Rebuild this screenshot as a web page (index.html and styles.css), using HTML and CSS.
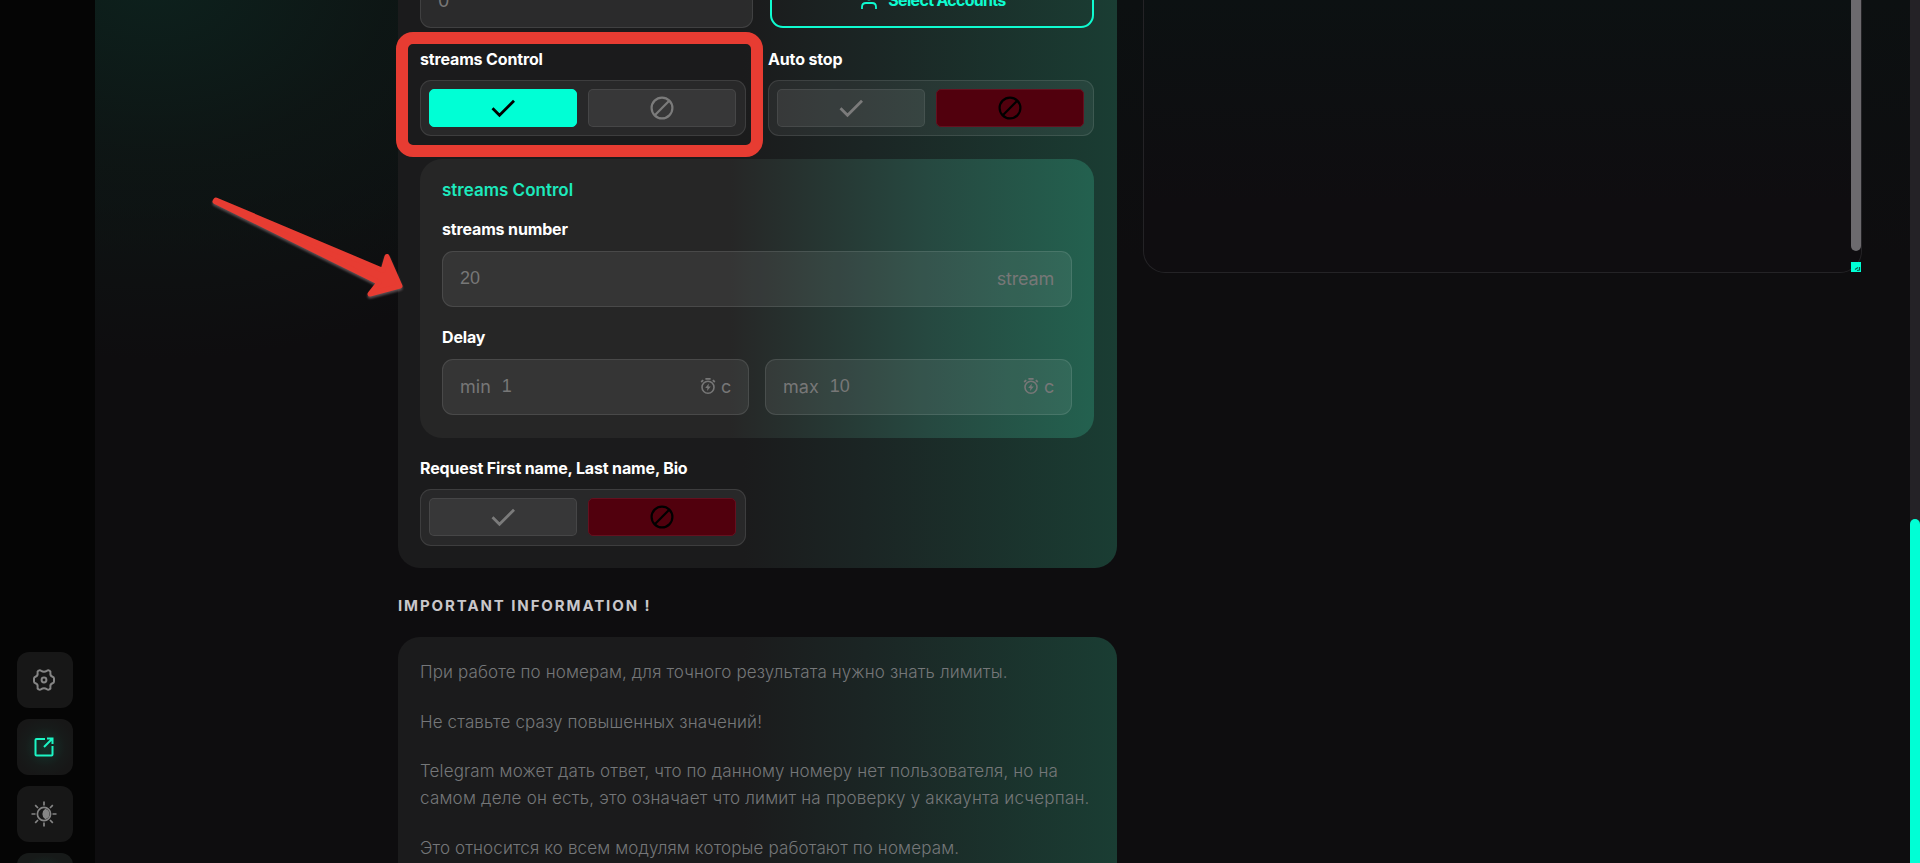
FILE: index.html
```html
<!DOCTYPE html>
<html lang="en">
  <head>
    <meta charset="UTF-8" />
    <meta name="viewport" content="width=device-width, initial-scale=1.0" />
    <title>Streams Control</title>
    <link rel="stylesheet" href="styles.css">
  </head>
  <body>
    <svg class="defs" width="0" height="0">
      <symbol id="check" viewBox="0 0 24 24">
        <path d="M1.5 12.2l7 7L23 4.8" fill="none" stroke="currentColor" stroke-width="2.8" />
      </symbol>
      <symbol id="ban" viewBox="0 0 24 24">
        <circle cx="12" cy="12" r="10.4" fill="none" stroke="currentColor" stroke-width="2.2" />
        <path d="M4.8 19.2L19.2 4.8" stroke="currentColor" stroke-width="2.2" />
      </symbol>
      <symbol id="timer" viewBox="0 0 16 18">
        <circle cx="8" cy="10.3" r="6" fill="none" stroke="currentColor" stroke-width="1.6" />
        <path d="M5.4 1.8h5.2M1.2 5l2-1.8M14.8 5l-2-1.8" stroke="currentColor" stroke-width="1.8" />
        <path d="M8.8 6.6L5.2 11h2.2l-.3 3 3.7-4.4H8.5z" fill="currentColor" />
      </symbol>
    </svg>

    <div class="app">
      <aside class="sidebar">
        <button class="side-btn">
          <svg width="24" height="24" viewBox="0 0 24 24" fill="none" stroke="currentColor" stroke-width="2">
            <path d="M14.800 2.800Q16.200 1.800 17.500 2.700Q18.900 3.600 18.400 5.200Q18 7.900 20.500 8.700Q22 9.200 22 10.500V13.500Q22 14.800 20.500 15.300Q18 16.100 18.400 18.800Q18.900 20.400 17.500 21.300Q16.200 22.200 14.800 21.200Q12 19.300 9.200 21.200Q7.800 22.200 6.500 21.300Q5.100 20.400 5.600 18.800Q6 16.100 3.500 15.300Q2 14.800 2 13.500V10.500Q2 9.200 3.500 8.700Q6 7.900 5.600 5.200Q5.100 3.600 6.500 2.700Q7.800 1.800 9.200 2.800Q12 4.700 14.800 2.800Z" />
            <circle cx="12" cy="12" r="2.400" />
          </svg>
        </button>
        <button class="side-btn active">
          <svg width="20" height="20" viewBox="0 0 20 20" fill="none" stroke="currentColor" stroke-width="2">
            <path d="M11 2H2.500Q1.500 2 1.500 3V17.500Q1.500 18.500 2.500 18.500H17.500Q18.500 18.500 18.500 17.500V9" />
            <path d="M10 10L18 2M13 1.500H18.500V7" />
          </svg>
        </button>
        <button class="side-btn">
          <svg width="26" height="26" viewBox="0 0 26 26" fill="none" stroke="currentColor" stroke-width="1.700">
            <circle cx="13" cy="13" r="6.600" />
            <path d="M13 .5v4M13 21.500v4M.5 13h4M21.500 13h4M4.200 4.200L7 7M19 19l2.800 2.800M4.200 21.800L7 19M19 7l2.800-2.800" />
            <path d="M14.500 8.800a4.400 4.400 0 0 1 0 8.400c-3-1.600-3-6.800 0-8.400z" fill="currentColor" />
          </svg>
        </button>
        <button class="side-btn glow"></button>
      </aside>

      <main class="content">
        <section class="form-col">
          <div class="card form-card">
            <div class="row top-row">
              <div class="input">0</div>
              <button class="select-btn">
                <svg width="16" height="20" viewBox="0 0 16 20" fill="none" stroke="currentColor" stroke-width="1.800">
                  <circle cx="8" cy="5.500" r="4" />
                  <path d="M1 19v-2q0-4 4-4h6q4 0 4 4v2" />
                </svg>
                Select Accounts
              </button>
            </div>

            <div class="row toggles">
              <div class="field marked">
                <div class="label">streams Control</div>
                <div class="switch">
                  <button class="opt on"><svg><use href="#check" /></svg></button>
                  <button class="opt"><svg><use href="#ban" /></svg></button>
                </div>
              </div>
              <div class="field">
                <div class="label">Auto stop</div>
                <div class="switch">
                  <button class="opt"><svg><use href="#check" /></svg></button>
                  <button class="opt off"><svg><use href="#ban" /></svg></button>
                </div>
              </div>
            </div>

            <div class="sub-card">
              <div class="sub-title">streams Control</div>
              <div class="label">streams number</div>
              <div class="input">
                <span class="value">20</span>
                <span class="unit">stream</span>
              </div>
              <div class="label label-delay">Delay</div>
              <div class="delay">
                <div class="input">
                  <span class="prefix">min</span>
                  <span class="value">1</span>
                  <span class="unit"><svg class="timer"><use href="#timer" /></svg>c</span>
                </div>
                <div class="input">
                  <span class="prefix">max</span>
                  <span class="value">10</span>
                  <span class="unit"><svg class="timer"><use href="#timer" /></svg>c</span>
                </div>
              </div>
            </div>

            <div class="field request">
              <div class="label">Request First name, Last name, Bio</div>
              <div class="switch">
                <button class="opt"><svg><use href="#check" /></svg></button>
                <button class="opt off"><svg><use href="#ban" /></svg></button>
              </div>
            </div>
          </div>

          <h2>IMPORTANT INFORMATION !</h2>

          <div class="card info">
            <p>При работе по номерам, для точного результата нужно знать лимиты.</p>
            <p>Не ставьте сразу повышенных значений!</p>
            <p>Telegram может дать ответ, что по данному номеру нет пользователя, но на<br><span class="wide">самом деле он есть, это означает что лимит на проверку у аккаунта исчерпан.</span></p>
            <p>Это относится ко всем модулям которые работают по номерам.</p>
          </div>
        </section>

        <section class="log">
          <div class="log-thumb"></div>
          <div class="log-corner">
            <svg width="10" height="10" viewBox="0 0 10 10"><path d="M4 7.500L7 5.500M6 8.500L8.500 8V5" fill="none" stroke="#0b5a48" stroke-width="1.200" /></svg>
          </div>
        </section>
      </main>

      <div class="page-scroll"><div class="page-thumb"></div></div>
    </div>

    <!-- arrow pointing at the streams block -->
    <svg class="arrow" width="200" height="110" viewBox="0 0 200 110">
      <path d="M6 7L173 77.500L177 63.500L190 93L160 101L169 89.500L5 8.500Z" stroke-width="5" stroke-linejoin="round" />
    </svg>
  </body>
</html>
```
FILE: styles.css
```css
*,
*::before {
  box-sizing: border-box;
}

body {
  margin: 0;
  height: 863px;
  overflow: hidden;
  background: #0e0d0f;
  color: #fff;
  font-family: Inter, "Open Sans", sans-serif;
}

button {
  border: none;
  padding: 0;
  font-family: inherit;
}

.defs {
  position: absolute;
}

.app {
  display: flex;
  height: 863px;
  overflow: hidden;
}

/* sidebar */
.sidebar {
  width: 95px;
  flex: none;
  padding: 652px 0 0 17px;
  display: flex;
  flex-direction: column;
  gap: 11px;
  background: #050505;
  overflow: hidden;
}

.side-btn {
  width: 56px;
  height: 56px;
  flex: none;
  padding-right: 2px;
  border-radius: 12px;
  background: #171717;
  color: #858585;
  display: flex;
  align-items: center;
  justify-content: center;
}

.side-btn.active {
  color: #1cf5c4;
  background: radial-gradient(circle, #14332b 0, #171b1a 50%, #171717 75%);
}

.side-btn.glow {
  background: radial-gradient(circle, #14332b 0, #171a19 65%);
}

.content {
  flex: 1;
  display: flex;
  align-items: flex-start;
  padding-left: 303px;
  background: radial-gradient(ellipse 520px 380px at 60px -20px, #0d211d 0, rgba(14, 24, 22, 0.75) 45%, rgba(14, 13, 15, 0) 100%),
    linear-gradient(#0c1011, #0e0d0f 30%);
}

/* form */
.form-col {
  width: 719px;
  flex: none;
}

.card {
  background: linear-gradient(90deg, #1b1b1c 48%, #1b2524 65%, #1a3d33);
}

.form-card {
  display: flow-root;
  height: 568px;
  padding: 0 23px 0 22px;
  border-radius: 0 0 22px 22px;
}

.row {
  display: flex;
  justify-content: space-between;
}

.top-row {
  margin-top: -28px;
}

.top-row .input {
  width: 333px;
}

.input {
  height: 56px;
  padding: 0 17px;
  border: 1px solid rgba(255, 255, 255, 0.1);
  border-radius: 11px;
  background: rgba(255, 255, 255, 0.07);
  color: #777;
  font-size: 18px;
  display: flex;
  align-items: center;
}

.select-btn {
  width: 324px;
  height: 56px;
  padding-left: 3px;
  border: 2px solid #0ffbd0;
  border-radius: 13px;
  background: none;
  color: #0ffbd0;
  font-size: 16px;
  font-weight: 700;
  letter-spacing: -0.7px;
  display: flex;
  align-items: center;
  justify-content: center;
  gap: 11px;
}

.field {
  position: relative;
  width: 326px;
}

.toggles {
  padding-top: 20px;
}

/* red frame around the field */
.marked::before {
  content: "";
  position: absolute;
  left: -24px;
  top: -16px;
  width: 367px;
  height: 125px;
  border: 12px solid #e73c32;
  border-radius: 17px;
}

.label {
  height: 32px;
  line-height: 23px;
  font-size: 16px;
  font-weight: 700;
  letter-spacing: -0.15px;
  white-space: nowrap;
}

.switch {
  height: 56px;
  padding: 8px;
  border: 1px solid rgba(255, 255, 255, 0.1);
  border-radius: 11px;
  background: rgba(255, 255, 255, 0.06);
  display: flex;
  gap: 11px;
}

.opt {
  width: 148px;
  height: 38px;
  border: 1px solid rgba(255, 255, 255, 0.08);
  border-radius: 5px;
  background: rgba(255, 255, 255, 0.07);
  color: #7b7b7b;
  display: flex;
  align-items: center;
  justify-content: center;
}

.opt svg {
  width: 24px;
  height: 24px;
}

.opt.on {
  background: #00ffd5;
  border-color: #00ffd5;
  color: #000;
}

.opt.off {
  background: #51000d;
  border-color: #65101f;
  color: #000;
}

.sub-card {
  height: 279px;
  margin-top: 23px;
  padding: 19px 22px 0;
  border-radius: 22px;
  background: linear-gradient(90deg, #262626 46%, #264840 75%, #23614f);
}

.sub-title {
  height: 40px;
  line-height: 24px;
  font-size: 17px;
  font-weight: 600;
  color: #1de9bd;
}

.sub-card .label {
  height: 33px;
}

.sub-card .label-delay {
  margin-top: 19px;
}

.prefix {
  margin: -2px 11px 0 0;
}

.value {
  margin-top: -2px;
  font-family: "Liberation Sans", Arial, sans-serif;
}

.unit {
  margin: -2px 0 0 auto;
  display: flex;
  align-items: center;
  letter-spacing: -0.2px;
}

.timer {
  width: 16px;
  height: 18px;
  margin-right: 5px;
}

.delay {
  display: grid;
  grid-template-columns: 1fr 1fr;
  gap: 16px;
}

.request {
  margin-top: 19px;
}

.request .switch {
  height: 57px;
}

h2 {
  margin: 27px 0 20px;
  line-height: 22px;
  font-size: 15px;
  font-weight: 700;
  letter-spacing: 1.9px;
  color: #c9c7ca;
}

.info {
  height: 300px;
  padding: 22px;
  border-radius: 22px;
}

.info p {
  margin: 0 0 22.5px;
  line-height: 27px;
  font-size: 17px;
  font-weight: 300;
  letter-spacing: 0.12px;
  color: #757779;
  white-space: nowrap;
}

.info .wide {
  letter-spacing: 0.21px;
}

/* log panel */
.log {
  position: relative;
  width: 719px;
  height: 273px;
  margin-left: 26px;
  border: 1px solid #242326;
  border-top: none;
  border-radius: 0 0 22px 22px;
  background: linear-gradient(#0c1112, #0f0d10 75%);
}

.log-thumb {
  position: absolute;
  top: 0;
  right: 0;
  width: 10px;
  height: 251px;
  border-radius: 0 0 5px 5px;
  background: #6c6a6e;
}

.log-corner {
  position: absolute;
  right: 0;
  bottom: 0;
  width: 10px;
  height: 10px;
  background: #00ffd5;
}

.log-corner svg {
  display: block;
}

.page-scroll {
  width: 10px;
  flex: none;
  padding-top: 519px;
  background: #242226;
}

.page-thumb {
  height: 344px;
  border-radius: 5px 5px 0 0;
  background: #00ffd5;
}

.arrow {
  position: absolute;
  left: 210px;
  top: 193px;
  fill: #e73c32;
  stroke: #e73c32;
  filter: drop-shadow(0 2px 1px rgba(140, 120, 125, 0.6));
}
```
